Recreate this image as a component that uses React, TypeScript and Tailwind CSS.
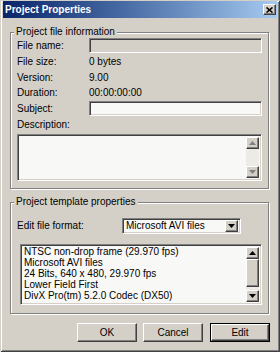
import React from "react";

const face = "bg-[#d4d0c8]";
const sunken =
  "border border-t-[#808080] border-l-[#808080] border-b-white border-r-white shadow-[inset_1px_1px_0_#404040,inset_-1px_-1px_0_#d4d0c8]";
const raised =
  "border border-t-white border-l-white border-b-[#404040] border-r-[#404040] shadow-[inset_-1px_-1px_0_#808080]";

const Arrow = ({ up, disabled }: { up?: boolean; disabled?: boolean }) => (
  <div className={`w-[13px] h-[12px] ${face} ${raised} flex items-center justify-center`}>
    <svg width="7" height="4" viewBox="0 0 7 4">
      {up ? (
        <path d="M3.5 0 L7 4 L0 4 Z" fill={disabled ? "#808080" : "#000"} />
      ) : (
        <path d="M0 0 L7 0 L3.5 4 Z" fill={disabled ? "#808080" : "#000"} />
      )}
    </svg>
  </div>
);

const Group = ({ title, children, className }: { title: string; children: React.ReactNode; className?: string }) => (
  <div className={`relative border border-[#808080] shadow-[1px_1px_0_#fff,inset_1px_1px_0_#fff] mr-[1px] ${className ?? ""}`}>
    <span className={`absolute -top-[7px] left-[3px] px-[2px] leading-[12px] ${face}`}>{title}</span>
    {children}
  </div>
);

const Row = ({ label, children, w, h }: { label: string; children: React.ReactNode; w: string; h: string }) => (
  <div className={`flex items-center ${h}`}>
    <div className={`${w} shrink-0`}>{label}</div>
    {children}
  </div>
);

export default function App() {
  return (
    <div
      className={`w-[280px] h-[352px] ${face} px-[3px] pt-[1px] text-[10px] leading-[12px] text-black font-[family-name:Liberation_Sans_Narrow,Liberation_Sans,Arial,sans-serif] shadow-[inset_1px_1px_0_#d4d0c8,inset_-1px_-1px_0_#404040,inset_2px_2px_0_#fff,inset_-2px_-2px_0_#808080] flex flex-col`}
    >
      <div className="h-[17px] flex items-center justify-between pl-[2px] pr-[1px] bg-gradient-to-r from-[#0a246a] to-[#a6caf0]">
        <span className="font-bold text-white text-[10px]">Project Properties</span>
        <div className={`w-[13px] h-[11px] ${face} ${raised} flex items-center justify-center`}>
          <svg width="7" height="6" viewBox="0 0 7 6">
            <path d="M0.5 0.5 L6.5 5.5 M6.5 0.5 L0.5 5.5" stroke="#000" strokeWidth="1.6" />
          </svg>
        </div>
      </div>

      <div className="px-[7px] flex flex-col">
        <Group title="Project file information" className="mt-[14px] pl-[6px] pr-[6px] pt-[5px] pb-[7px]">
          <Row label="File name:" w="w-[72px]" h="h-[15px]">
            <div className={`flex-1 h-[15px] ${sunken}`} />
          </Row>
          <Row label="File size:" w="w-[72px]" h="h-[12px] mt-[3px]">
            <span>0 bytes</span>
          </Row>
          <Row label="Version:" w="w-[72px]" h="h-[12px] mt-[4px]">
            <span>9.00</span>
          </Row>
          <Row label="Duration:" w="w-[72px]" h="h-[12px] mt-[3px]">
            <span>00:00:00:00</span>
          </Row>
          <Row label="Subject:" w="w-[72px]" h="h-[15px] mt-[2px]">
            <div className={`flex-1 h-[15px] bg-[#f8f8f6] ${sunken}`} />
          </Row>
          <div className="h-[12px] mt-[3px]">Description:</div>
          <div className={`mt-[3px] h-[47px] bg-[#f8f8f6] ${sunken} p-[2px] flex justify-end`}>
            <div className="w-[13px] flex flex-col bg-[#ecebe6]">
              <Arrow up disabled />
              <div className="flex-1" />
              <Arrow disabled />
            </div>
          </div>
        </Group>

        <Group title="Project template properties" className="mt-[13px] pl-[6px] pr-[6px] pt-[15px] pb-[8px]">
          <Row label="Edit file format:" w="w-[105px]" h="h-[16px]">
            <div className={`w-[119px] h-[16px] bg-[#f8f8f6] ${sunken} p-[2px] flex items-center`}>
              <span className="flex-1 pl-[1px] truncate">Microsoft AVI files</span>
              <Arrow />
            </div>
          </Row>
          <div className={`mt-[10px] ml-[3px] h-[61px] bg-[#f8f8f6] ${sunken} p-[2px] flex`}>
            <div className="flex-1 leading-[11px] pl-[1px] -mt-[1px]">
              <div>NTSC non-drop frame (29.970 fps)</div>
              <div>Microsoft AVI files</div>
              <div>24 Bits, 640 x 480, 29.970 fps</div>
              <div>Lower Field First</div>
              <div>DivX Pro(tm) 5.2.0 Codec (DX50)</div>
            </div>
            <div className="w-[13px] flex flex-col bg-[#ecebe6]">
              <Arrow up />
              <div className={`h-[28px] ${face} ${raised}`} />
              <div className="flex-1" />
              <Arrow />
            </div>
          </div>
        </Group>

        <div className="mt-[9px] flex justify-end gap-[6px]">
          <button className={`w-[60px] h-[19px] ${face} ${raised}`}>OK</button>
          <button className={`w-[60px] h-[19px] ${face} ${raised}`}>Cancel</button>
          <div className="ml-[1px] w-[60px] h-[19px] border border-black">
            <button className={`w-full h-full ${face} ${raised}`}>Edit</button>
          </div>
        </div>
      </div>
    </div>
  );
}
